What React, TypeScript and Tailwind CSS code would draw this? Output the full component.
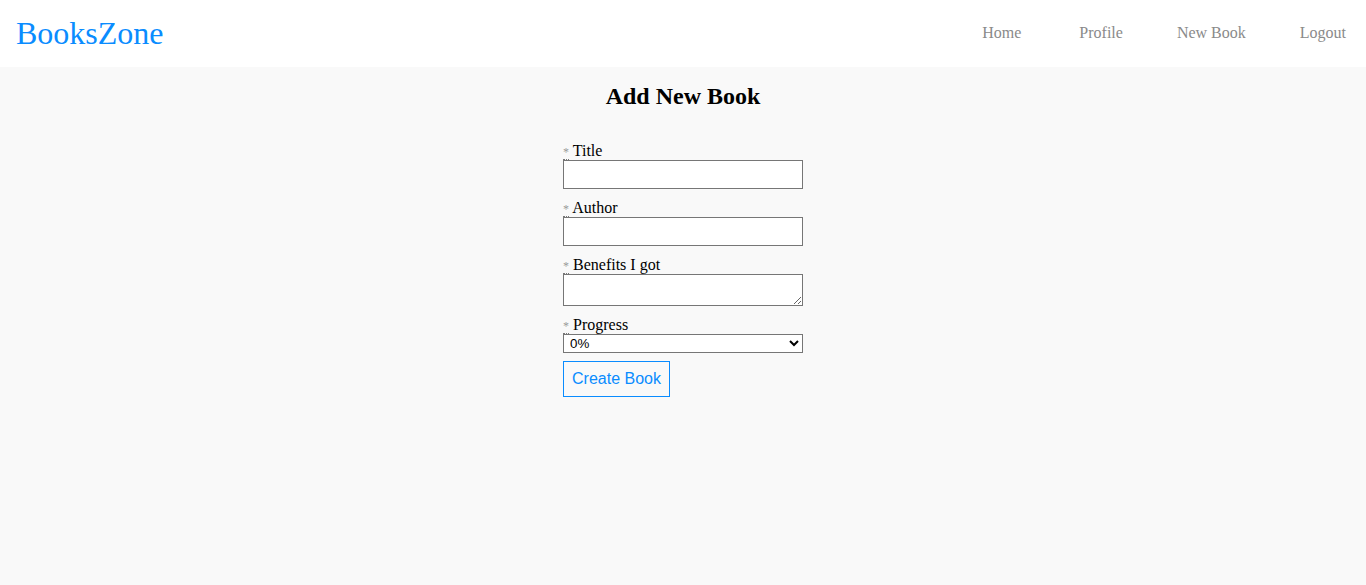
import React from "react";

const serif = "font-['Liberation_Serif','Times_New_Roman',serif]";
const sans = "font-['Liberation_Sans',Arial,sans-serif]";

function Req() {
  return (
    <abbr
      title="required"
      className="text-[12px] leading-none text-[#999] no-underline border-b border-dotted border-[#777] cursor-help"
    >
      *
    </abbr>
  );
}

function Label({ text }: { text: string }) {
  return (
    <label className="block h-[18px] text-[16px] leading-[18px] text-black whitespace-nowrap">
      <Req /> {text}
    </label>
  );
}

export default function App() {
  const links = ["Home", "Profile", "New Book", "Logout"];

  return (
    <div className={`min-h-screen bg-[#f9f9f9] ${serif}`}>
      <header className="h-[67px] bg-white flex items-center justify-between pl-[16px] pr-[20px] pb-[2px]">
        <a href="#" className="text-[32px] leading-none text-[#0a8cff]">
          BooksZone
        </a>
        <nav className="flex items-center">
          {links.map((l, i) => (
            <a
              key={l}
              href="#"
              className={`text-[16px] text-[#8a8a8a] ${i === 0 ? "mr-[58px]" : i < links.length - 1 ? "mr-[54px]" : ""}`}
            >
              {l}
            </a>
          ))}
        </nav>
      </header>

      <main className="flex flex-col items-center">
        <h2 className="mt-[15px] text-[24px] leading-[28px] font-bold text-black">Add New Book</h2>

        <form className="w-[240px] mt-[32px] flex flex-col" onSubmit={(e) => e.preventDefault()}>
          <div className="flex flex-col mb-[10px]">
            <Label text="Title" />
            <input type="text" className="h-[29px] w-full bg-white border border-[#767676] px-1" />
          </div>
          <div className="flex flex-col mb-[10px]">
            <Label text="Author" />
            <input type="text" className="h-[29px] w-full bg-white border border-[#767676] px-1" />
          </div>
          <div className="flex flex-col mb-[10px]">
            <Label text="Benefits I got" />
            <textarea className="h-[32px] w-full bg-white border border-[#767676] px-1 block resize-y" />
          </div>
          <div className="flex flex-col mb-[8px]">
            <Label text="Progress" />
            <select
              defaultValue="0"
              className={`h-[19px] w-full bg-white border border-[#767676] text-[13.33px] leading-[17px] pl-[2px] ${sans}`}
            >
              <option value="0">0%</option>
              <option value="25">25%</option>
              <option value="50">50%</option>
              <option value="75">75%</option>
              <option value="100">100%</option>
            </select>
          </div>
          <div>
            <button
              type="submit"
              className={`h-[36px] w-[107px] border border-solid border-[#0a8cff] text-[#0a8cff] text-[16px] bg-transparent ${sans}`}
            >
              Create Book
            </button>
          </div>
        </form>
      </main>
    </div>
  );
}
